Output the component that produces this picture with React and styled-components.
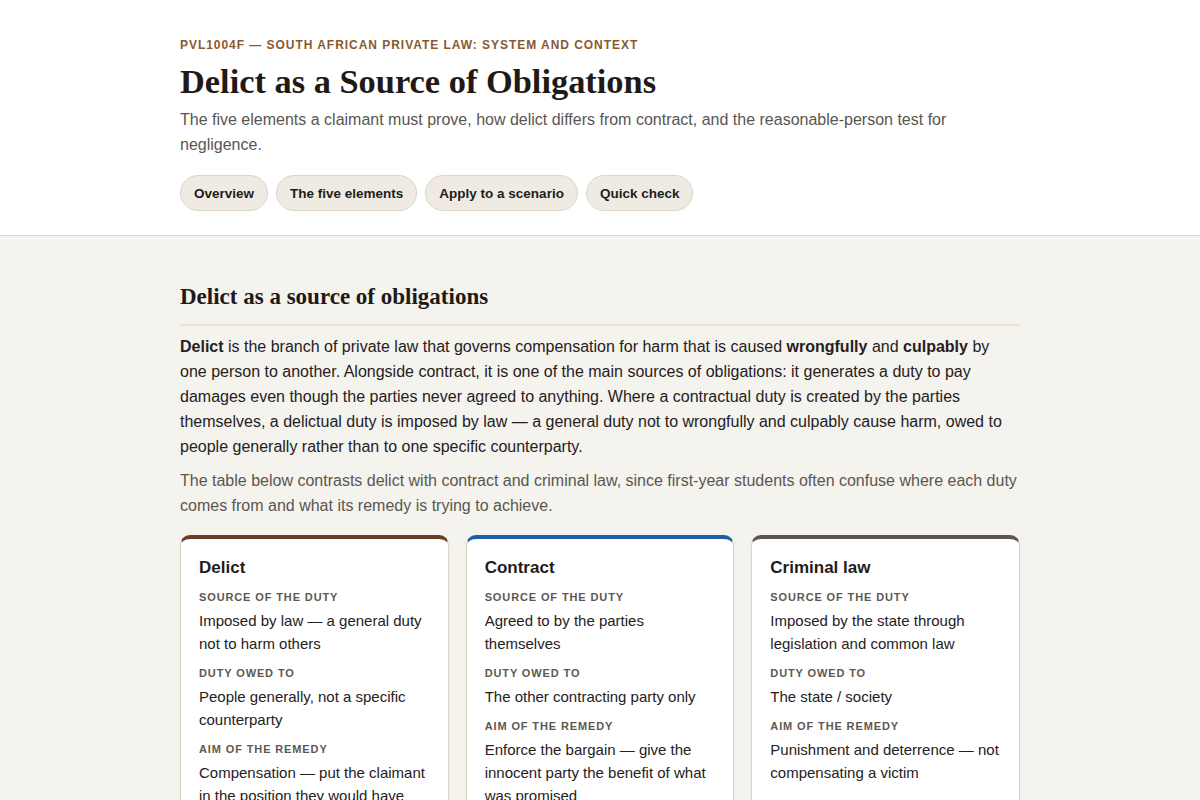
import React from 'react';
import styled, { createGlobalStyle } from 'styled-components';

const GlobalStyle = createGlobalStyle`
  html, body {
    margin: 0;
    padding: 0;
    background: #f5f3ee;
    color: #1f1d1a;
    font-family: "Liberation Sans", Arial, sans-serif;
  }
  * { box-sizing: border-box; }
`;

const comparisons = [
  {
    title: 'Delict',
    accent: '#6e3b27',
    rows: [
      ['Source of the duty', 'Imposed by law — a general duty not to harm others'],
      ['Duty owed to', 'People generally, not a specific counterparty'],
      ['Aim of the remedy', 'Compensation — put the claimant in the position they would have been in had the delict not occurred'],
    ],
  },
  {
    title: 'Contract',
    accent: '#1f5fa8',
    rows: [
      ['Source of the duty', 'Agreed to by the parties themselves'],
      ['Duty owed to', 'The other contracting party only'],
      ['Aim of the remedy', 'Enforce the bargain — give the innocent party the benefit of what was promised'],
    ],
  },
  {
    title: 'Criminal law',
    accent: '#5b5750',
    rows: [
      ['Source of the duty', 'Imposed by the state through legislation and common law'],
      ['Duty owed to', 'The state / society'],
      ['Aim of the remedy', 'Punishment and deterrence — not compensating a victim'],
    ],
  },
];

const tabs = ['Overview', 'The five elements', 'Apply to a scenario', 'Quick check'];

const App = () => {
  return (
    <>
      <GlobalStyle />
      <Header>
        <Inner>
          <Eyebrow>PVL1004F — South African Private Law: System and Context</Eyebrow>
          <Title>Delict as a Source of Obligations</Title>
          <Subtitle>
            The five elements a claimant must prove, how delict differs from contract, and the
            reasonable-person test for negligence.
          </Subtitle>
          <TabRow>
            {tabs.map((t) => (
              <Pill key={t}>{t}</Pill>
            ))}
          </TabRow>
        </Inner>
      </Header>
      <Main>
        <Inner>
          <SectionTitle>Delict as a source of obligations</SectionTitle>
          <Lead>
            <strong>Delict</strong> is the branch of private law that governs compensation for harm
            that is caused <strong>wrongfully</strong> and <strong>culpably</strong> by one person to
            another. Alongside contract, it is one of the main sources of obligations: it generates a
            duty to pay damages even though the parties never agreed to anything. Where a contractual
            duty is created by the parties themselves, a delictual duty is imposed by law — a general
            duty not to wrongfully and culpably cause harm, owed to people generally rather than to
            one specific counterparty.
          </Lead>
          <Note>
            The table below contrasts delict with contract and criminal law, since first-year
            students often confuse where each duty comes from and what its remedy is trying to
            achieve.
          </Note>
          <CardGrid>
            {comparisons.map((c) => (
              <Card key={c.title} $accent={c.accent}>
                <CardTitle>{c.title}</CardTitle>
                {c.rows.map(([label, value]) => (
                  <Field key={label}>
                    <FieldLabel>{label}</FieldLabel>
                    <FieldValue>{value}</FieldValue>
                  </Field>
                ))}
              </Card>
            ))}
          </CardGrid>
        </Inner>
      </Main>
    </>
  );
};

export default App;

const Header = styled.header`
  background: #ffffff;
  border-bottom: 1px solid #ddd5c8;
  padding: 38px 0 24px;
`;

const Inner = styled.div`
  width: 840px;
  margin: 0 auto;
`;

const Eyebrow = styled.div`
  font-size: 12px;
  font-weight: 700;
  letter-spacing: 0.08em;
  text-transform: uppercase;
  color: #8a5a2e;
`;

const Title = styled.h1`
  margin: 9px 0 0;
  font-family: "Liberation Serif", "Times New Roman", serif;
  font-size: 34.4px;
  line-height: 1.2;
  font-weight: 700;
  color: #1f1a15;
`;

const Subtitle = styled.p`
  margin: 5px 0 0;
  font-size: 16px;
  line-height: 25px;
  color: #5a5650;
  max-width: 800px;
`;

const TabRow = styled.nav`
  display: flex;
  gap: 8px;
  margin-top: 18px;
`;

const Pill = styled.button`
  height: 36px;
  padding: 0 13px;
  border-radius: 18px;
  border: 1px solid #dcd5c8;
  background: #efebe3;
  color: #1f1d1a;
  font-family: "Liberation Sans", Arial, sans-serif;
  font-size: 13.5px;
  font-weight: 700;
  cursor: pointer;
`;

const Main = styled.main`
  padding: 47px 0 40px;
`;

const SectionTitle = styled.h2`
  margin: 0;
  padding-bottom: 13px;
  border-bottom: 2px solid #ebe3d7;
  font-family: "Liberation Serif", "Times New Roman", serif;
  font-size: 23px;
  line-height: 1.2;
  font-weight: 700;
  color: #1f1a15;
`;

const Lead = styled.p`
  margin: 8px 0 0;
  font-size: 16px;
  line-height: 25px;
  color: #24211d;

  strong { font-weight: 700; }
`;

const Note = styled.p`
  margin: 9px 0 0;
  font-size: 16px;
  line-height: 25px;
  color: #5a5650;
`;

const CardGrid = styled.div`
  display: grid;
  grid-template-columns: repeat(3, 1fr);
  gap: 17px;
  margin-top: 17px;
`;

const Card = styled.div`
  background: #ffffff;
  border: 1px solid #ddd6ca;
  border-top: 4px solid ${(p) => p.$accent};
  border-radius: 10px;
  padding: 18px 18px 18px;
  box-shadow: 0 1px 3px rgba(60, 45, 25, 0.08);
`;

const CardTitle = styled.h3`
  margin: 0;
  font-size: 17px;
  line-height: 22px;
  font-weight: 700;
  color: #1f1d1a;
`;

const Field = styled.div`
  margin-top: 11px;
`;

const FieldLabel = styled.div`
  font-size: 11px;
  font-weight: 700;
  letter-spacing: 0.08em;
  text-transform: uppercase;
  color: #5e5850;
  line-height: 14px;
`;

const FieldValue = styled.div`
  margin-top: 5px;
  font-size: 15px;
  line-height: 23px;
  color: #24211d;
`;
